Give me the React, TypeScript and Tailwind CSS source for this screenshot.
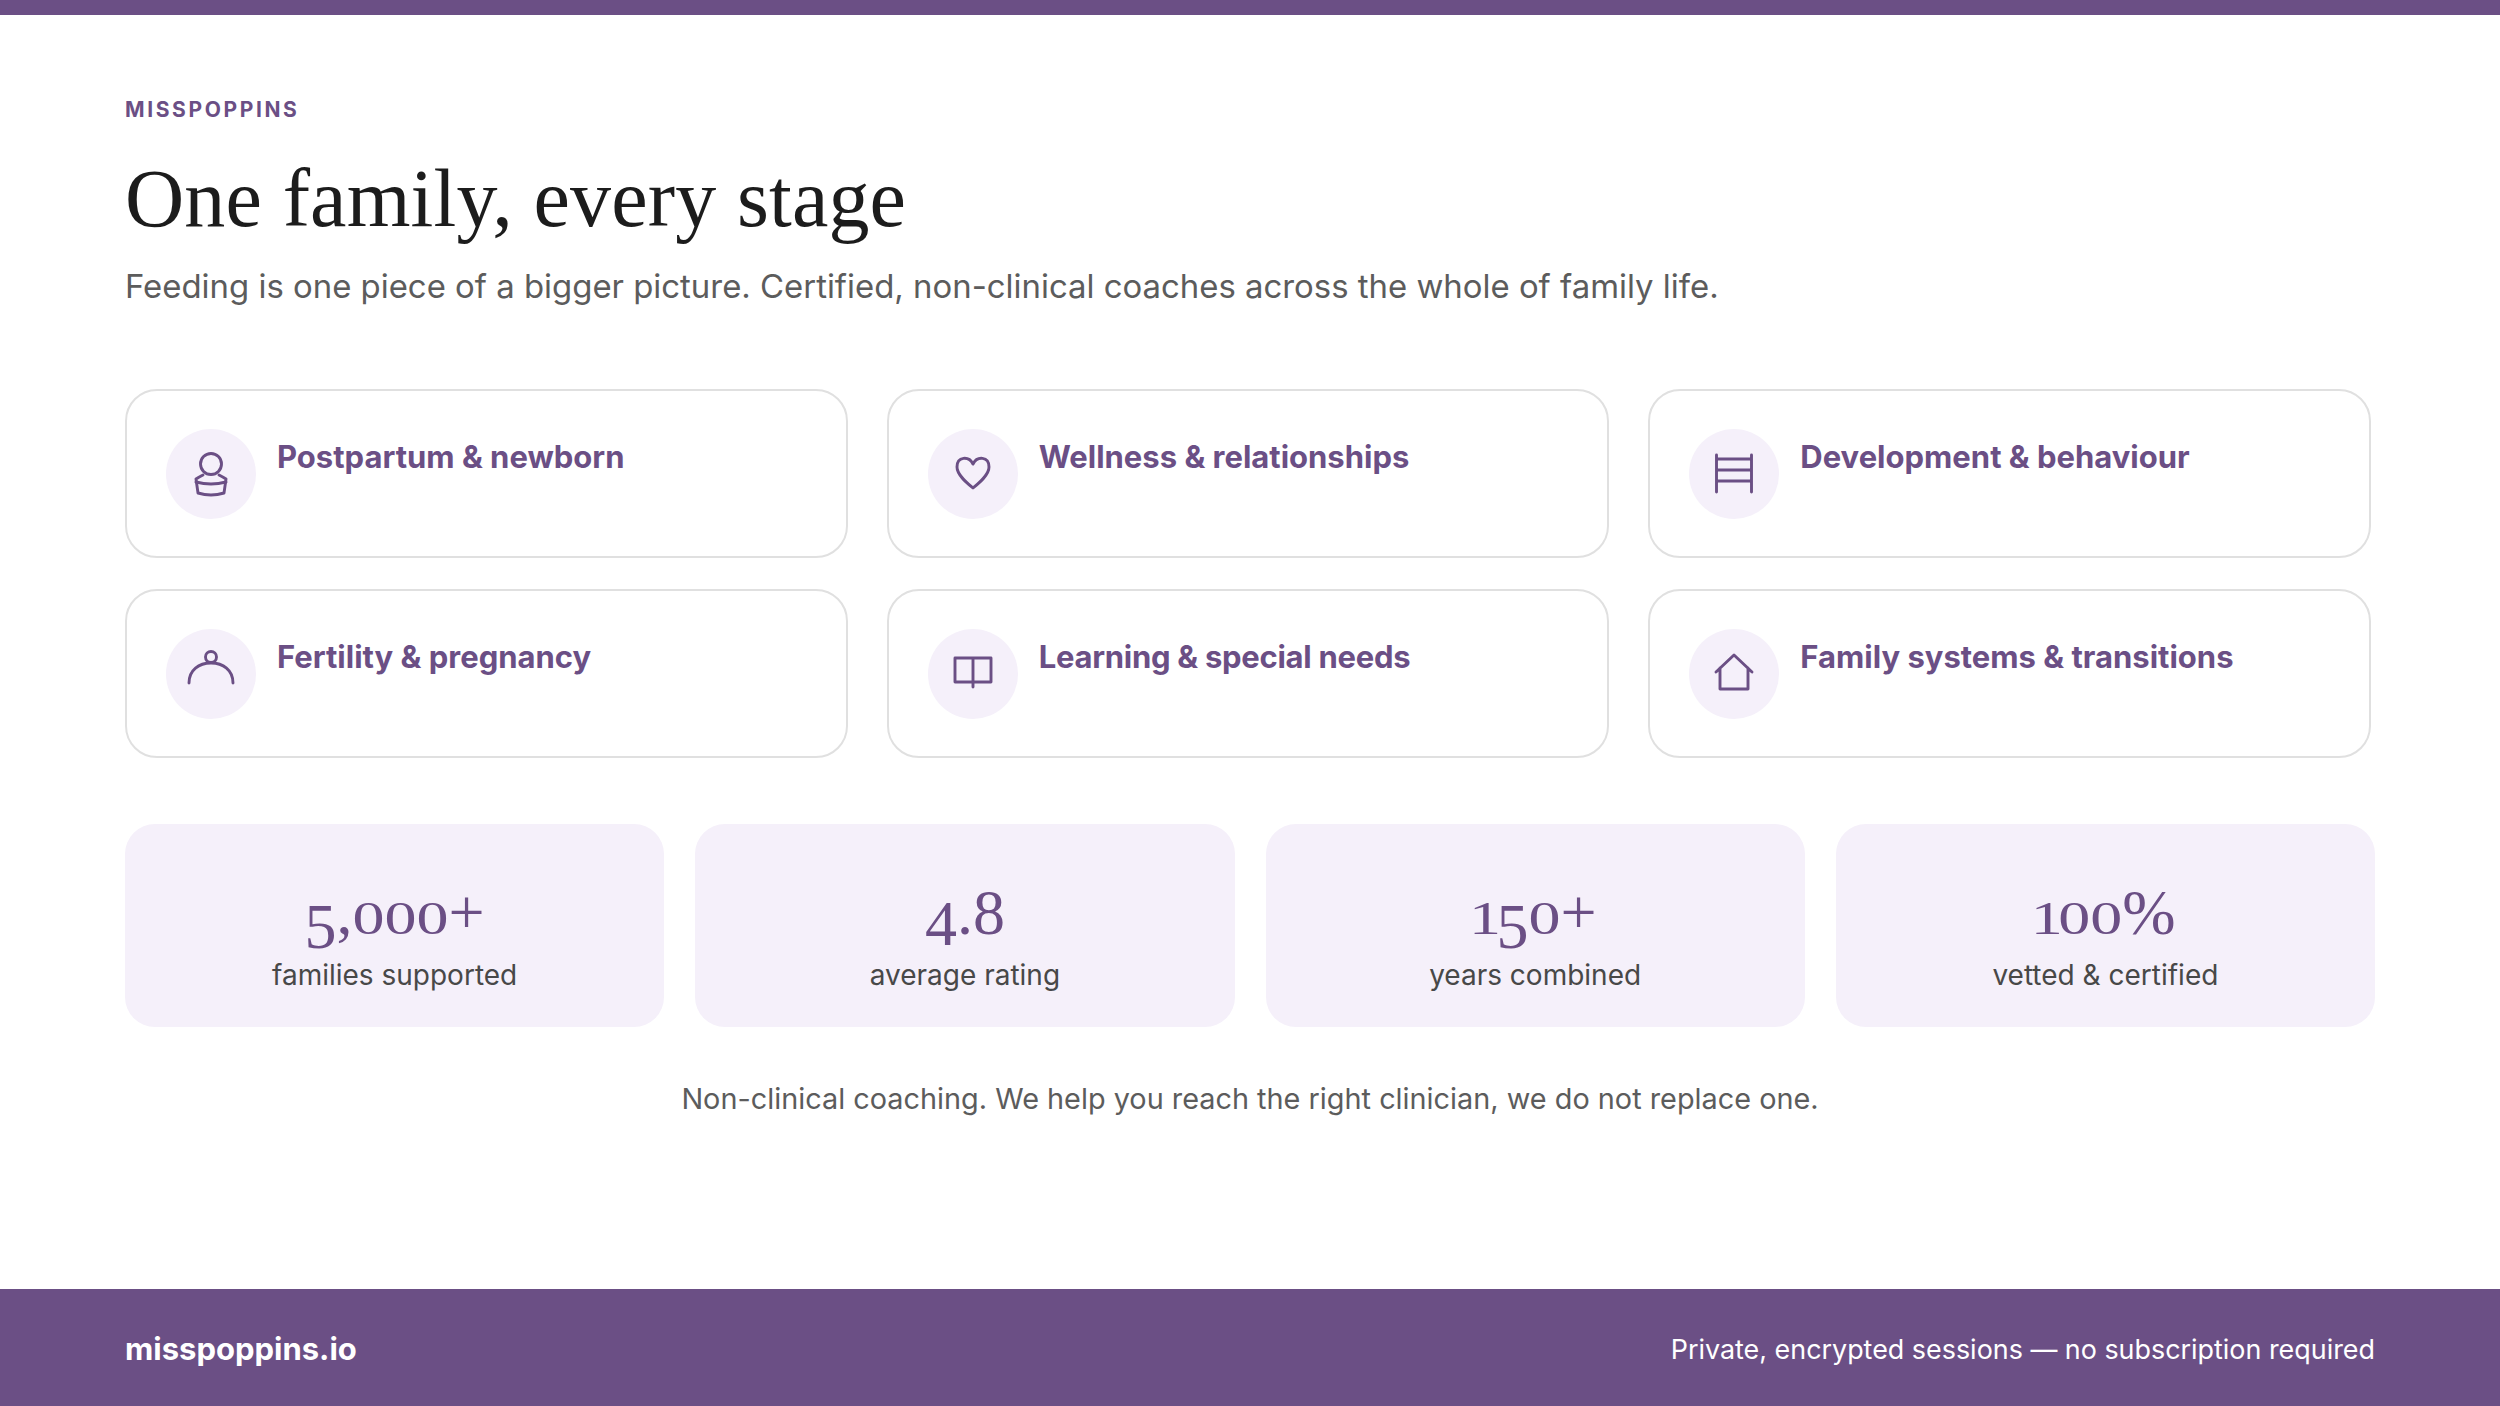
import React from 'react'

const sans = "font-['Inter','Open_Sans',sans-serif]"
const serif = "font-['Liberation_Serif',serif]"

// icons are drawn in px around the centre of the 90px circle
const Glyph: React.FC<{ children: React.ReactNode }> = ({ children }) => (
  <svg width="60" height="60" viewBox="-30 -30 60 60" fill="none" stroke="#6b4f85" strokeWidth="2.9" strokeLinecap="round" strokeLinejoin="round">
    {children}
  </svg>
)

const icons = {
  postpartum: (
    <Glyph>
      <circle cx="0" cy="-10" r="10.5" />
      <path d="M-8 1 Q-12 3 -15 5 L-13 19 Q0 23 13 19 L15 5 Q12 3 8 1" />
      <path d="M-15 8 Q0 12 15 8" />
    </Glyph>
  ),
  wellness: (
    <Glyph>
      <path d="M0 -10 C-4 -18 -16 -18 -16 -7 C-16 1 -6 9 0 14 C6 9 16 1 16 -7 C16 -18 4 -18 0 -10 Z" />
    </Glyph>
  ),
  development: (
    <Glyph>
      <path d="M-17.5 -19 V18 M17.5 -19 V18 M-17.5 -15 H17.5 M-17.5 -4 H17.5 M-17.5 7 H17.5" />
    </Glyph>
  ),
  fertility: (
    <Glyph>
      <circle cx="0" cy="-17" r="5.5" />
      <path d="M-22 9 C-22 -4 -12 -11 0 -11 C12 -11 22 -4 22 9" />
    </Glyph>
  ),
  learning: (
    <Glyph>
      <path d="M-18 -16 H18 V8 H-18 Z M0 -16 V13" />
    </Glyph>
  ),
  family: (
    <Glyph>
      <path d="M-18 -2 L0 -19 L18 -2 M-14 -6 V15 H14 V-6" />
    </Glyph>
  ),
}

const areas = [
  { title: 'Postpartum & newborn', icon: icons.postpartum, fit: '' },
  { title: 'Wellness & relationships', icon: icons.wellness, fit: '' },
  { title: 'Development & behaviour', icon: icons.development, fit: '' },
  { title: 'Fertility & pregnancy', icon: icons.fertility, fit: '' },
  { title: 'Learning & special needs', icon: icons.learning, fit: 'tracking-[-0.27px]' },
  { title: 'Family systems & transitions', icon: icons.family, fit: '' },
]

const stats = [
  { value: '5,000+', label: 'families supported' },
  { value: '4.8', label: 'average rating' },
  { value: '150+', label: 'years combined' },
  { value: '100%', label: 'vetted & certified' },
]

// the serif has lining figures only, so old-style ones are faked per digit
const figureClass: Record<string, string> = {
  '0': 'inline-block origin-[50%_60px] scale-y-[0.72]',
  '1': 'mx-[-4.5px] inline-block origin-[50%_60px] scale-y-[0.72]',
  '5': 'inline-block translate-y-[14px]',
  '4': 'inline-block translate-y-[11px]',
}

const Figures: React.FC<{ value: string }> = ({ value }) => (
  <>
    {value.split('').map((c, i) => (
      <span key={i} className={figureClass[c]}>{c}</span>
    ))}
  </>
)

export default function App() {
  return (
    <div className={`flex h-[1406px] w-[2500px] flex-col bg-white ${sans}`}>
      <div className="h-[15px] bg-[#6b4f85]" />

      <main className="flex-1 px-[125px] pt-[82px]">
        <div className="text-[21px] leading-[25px] font-bold tracking-[0.125em] text-[#6b4f85]">MISSPOPPINS</div>
        <h1 className={`mt-[27px] text-[82px] leading-[100px] font-normal tracking-[0.14px] text-[#1c1c1c] ${serif}`}>One family, every stage</h1>
        <p className="mt-[14px] text-[32.9px] leading-[46px] text-[#5c5c5c]">Feeding is one piece of a bigger picture. Certified, non-clinical coaches across the whole of family life.</p>

        <div className="mt-[80px] grid w-[2246px] grid-cols-3 gap-x-[39px] gap-y-[31px]">
          {areas.map((a) => (
            <div key={a.title} className="flex h-[169px] items-start gap-[21px] rounded-[32px] border-2 border-[#e0e0e0] bg-white px-[39px] py-[38px]">
              <div className="flex h-[90px] w-[90px] shrink-0 items-center justify-center rounded-full bg-[#f5f0fa]">{a.icon}</div>
              <div className={`mt-[5px] text-[31px] leading-[46px] font-bold text-[#6b4f85] ${a.fit}`}>{a.title}</div>
            </div>
          ))}
        </div>

        <div className="mt-[66px] grid grid-cols-4 gap-x-[31px]">
          {stats.map((s) => (
            <div key={s.label} className="flex h-[203px] flex-col items-center rounded-[30px] bg-[#f5f0fa] pt-[51px]">
              <div className={`text-[64px] leading-[76px] text-[#6b4f85] ${serif}`}><Figures value={s.value} /></div>
              <div className="mt-[4px] text-[28px] leading-[40px] text-[#484848]">{s.label}</div>
            </div>
          ))}
        </div>

        <p className="mt-[52px] text-center text-[28.85px] leading-[40px] text-[#5c5c5c]">Non-clinical coaching. We help you reach the right clinician, we do not replace one.</p>
      </main>

      <footer className="flex h-[117px] items-center justify-between bg-[#6b4f85] px-[125px] pt-[4px] text-white">
        <div className="text-[31px] font-bold">misspoppins.io</div>
        <div className="text-[26.9px]">Private, encrypted sessions — no subscription required</div>
      </footer>
    </div>
  )
}
